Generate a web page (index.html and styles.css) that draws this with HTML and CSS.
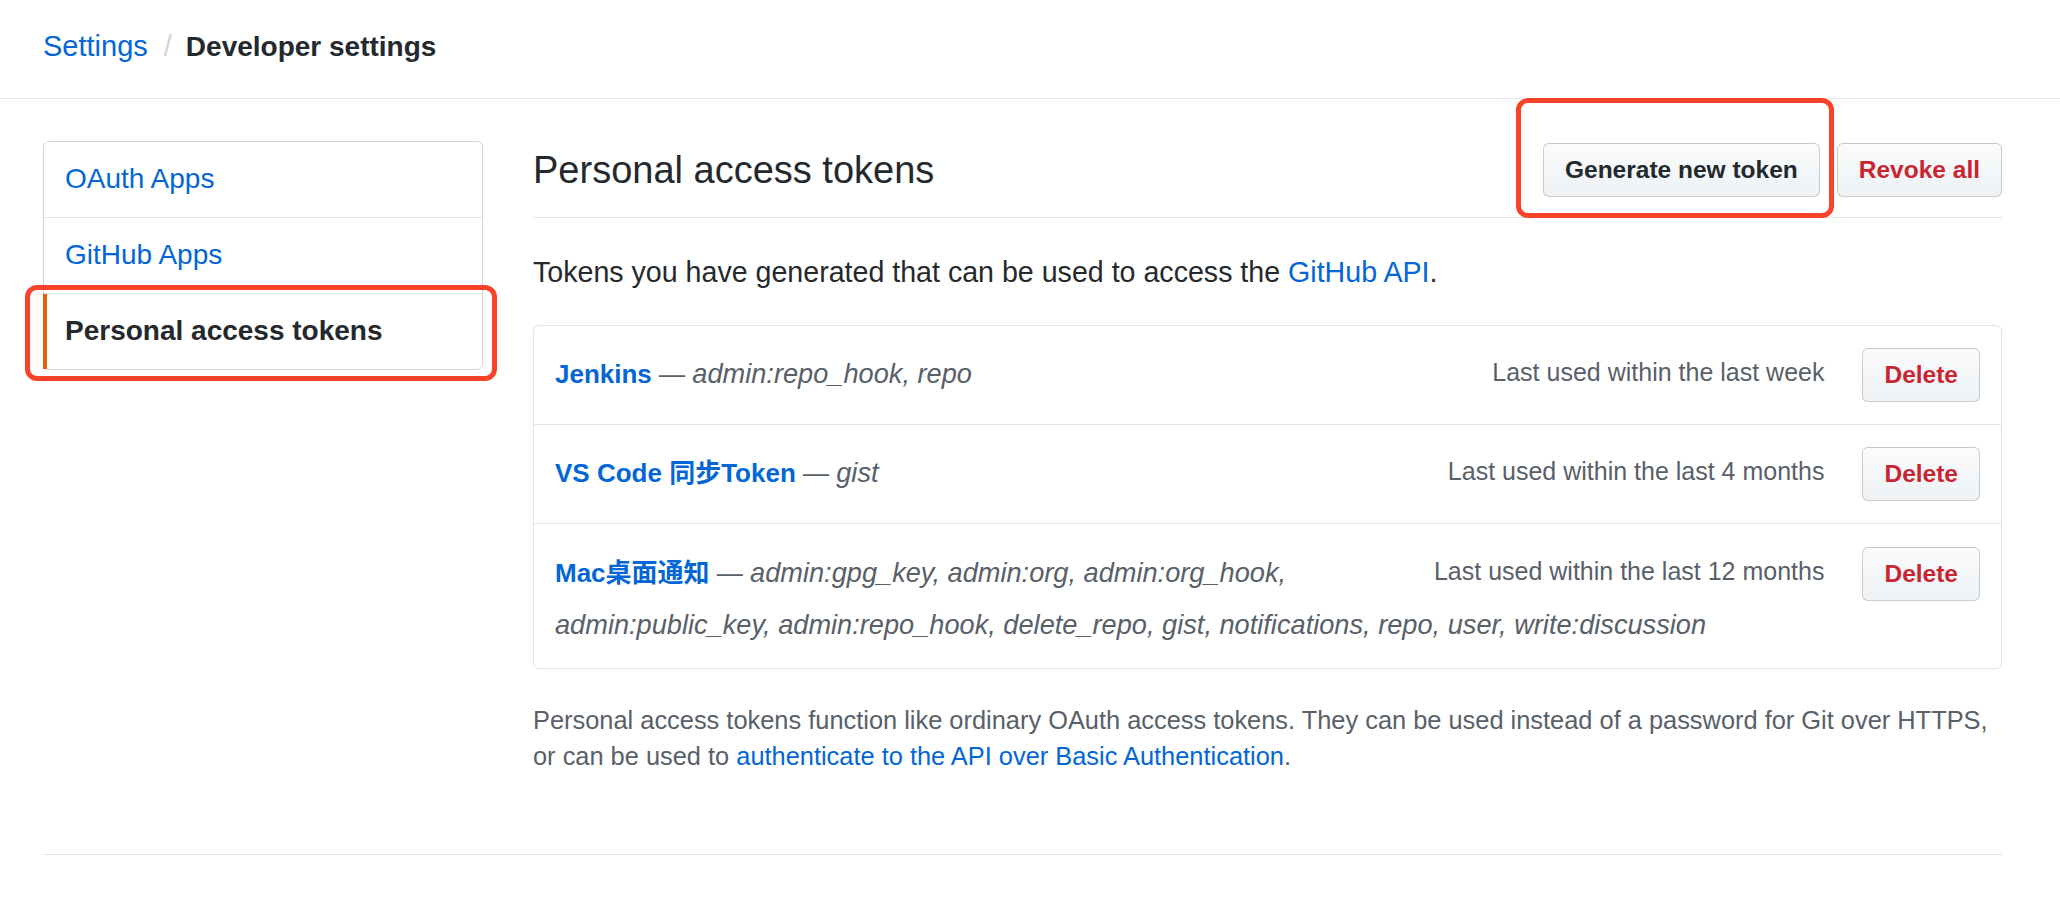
FILE: index.html
```html
<!DOCTYPE html>
<html lang="en">
<head>
<meta charset="utf-8">
<title>Personal access tokens</title>
<link rel="stylesheet" href="styles.css">
</head>
<body>
<header class="page-header">
  <nav class="breadcrumb">
    <a href="#" class="crumb-link">Settings</a>
    <span class="crumb-sep">/</span>
    <strong class="crumb-current">Developer settings</strong>
  </nav>
</header>
<div class="layout">
  <aside class="sidebar">
    <nav class="menu">
      <a class="menu-item" href="#">OAuth Apps</a>
      <a class="menu-item" href="#">GitHub Apps</a>
      <a class="menu-item selected" href="#">Personal access tokens</a>
    </nav>
  </aside>
  <main class="content">
    <div class="subhead">
      <h2 class="subhead-heading">Personal access tokens</h2>
      <div class="subhead-actions">
        <a href="#" class="btn btn-highlight">Generate new token</a>
        <a href="#" class="btn btn-danger">Revoke all</a>
      </div>
    </div>
    <p class="intro">Tokens you have generated that can be used to access the <a href="#">GitHub API</a>.</p>
    <div class="listgroup">
      <div class="listgroup-item">
        <a href="#" class="btn btn-danger btn-delete">Delete</a>
        <small class="last-used">Last used within the last week</small>
        <a href="#" class="token-name">Jenkins</a> <span class="token-scopes">— <em>admin:repo_hook, repo</em></span>
      </div>
      <div class="listgroup-item">
        <a href="#" class="btn btn-danger btn-delete">Delete</a>
        <small class="last-used">Last used within the last 4 months</small>
        <a href="#" class="token-name">VS Code 同步Token</a> <span class="token-scopes">— <em>gist</em></span>
      </div>
      <div class="listgroup-item">
        <a href="#" class="btn btn-danger btn-delete">Delete</a>
        <small class="last-used">Last used within the last 12 months</small>
        <a href="#" class="token-name">Mac桌面通知</a> <span class="token-scopes">— <em>admin:gpg_key, admin:org, admin:org_hook, admin:public_key, admin:repo_hook, delete_repo, gist, notifications, repo, user, write:discussion</em></span>
      </div>
    </div>
    <p class="note">Personal access tokens function like ordinary OAuth access tokens. They can be used instead of a password for Git over HTTPS, or can be used to <a href="#">authenticate to the API over Basic Authentication</a>.</p>
  </main>
</div>
<footer class="page-footer"></footer>
</body>
</html>
```

FILE: styles.css
```css
* {
  box-sizing: border-box;
}

body {
  margin: 0;
  font-family: "Liberation Sans", Arial, "Noto Sans CJK SC", sans-serif;
  color: #24292e;
  background: #fff;
}

a {
  color: #0366d6;
  text-decoration: none;
}

/* Header / breadcrumb */
.page-header {
  height: 99px;
  padding: 25px 43px 0;
  border-bottom: 1px solid #e1e4e8;
}

.breadcrumb {
  display: flex;
  align-items: baseline;
  font-size: 29px;
  line-height: 43px;
}

.crumb-sep {
  color: #d1d5da;
  margin: 0 14px 0 16px;
}

.crumb-current {
  font-size: 28px;
  font-weight: 700;
  color: #24292e;
}

/* Layout */
.layout {
  display: flex;
  gap: 50px;
  padding: 42px 58px 0 43px;
}

.sidebar {
  flex: none;
  width: 440px;
}

.menu {
  border: 1px solid #d1d5da;
  border-radius: 6px;
}

.menu-item {
  position: relative;
  display: block;
  padding: 16px 21px 17px;
  font-size: 28px;
  line-height: 42px;
  border-bottom: 1px solid #e1e4e8;
}

.menu-item:last-child {
  border-bottom: 0;
}

.menu-item.selected {
  color: #24292e;
  font-weight: 700;
}

.menu-item.selected::before {
  content: "";
  position: absolute;
  left: -1px;
  top: 0;
  bottom: 0;
  width: 4px;
  background: #e36209;
}

.menu-item.selected::after {
  content: "";
  position: absolute;
  left: -19px;
  top: -9px;
  right: -15px;
  bottom: -12px;
  border: 5px solid #f8432a;
  border-radius: 12px;
  z-index: 2;
}

/* Main content */
.content {
  flex: 1;
  min-width: 0;
}

.subhead {
  display: flex;
  align-items: center;
  justify-content: space-between;
  margin-top: 2px;
  padding-bottom: 20px;
  border-bottom: 1px solid #e1e4e8;
}

.subhead-heading {
  margin: 0;
  font-size: 38px;
  font-weight: 400;
  line-height: 47px;
}

.subhead-actions {
  display: flex;
  gap: 17px;
}

.btn {
  display: inline-block;
  padding: 6px 21px;
  font-size: 24.5px;
  font-weight: 700;
  line-height: 40px;
  color: #24292e;
  white-space: nowrap;
  background-color: #eff3f6;
  background-image: linear-gradient(-180deg, #fafbfc 0%, #eff3f6 90%);
  border: 1px solid rgba(27, 31, 35, 0.2);
  border-radius: 6px;
}

.btn-danger {
  color: #cb2431;
}

.btn-highlight {
  position: relative;
}

.btn-highlight::after {
  content: "";
  position: absolute;
  left: -28px;
  top: -46px;
  right: -15px;
  bottom: -22px;
  border: 5px solid #f8432a;
  border-radius: 12px;
}

.intro {
  margin: 33px 0 0;
  font-size: 28.6px;
  line-height: 42px;
}

/* Token list */
.listgroup {
  margin-top: 32px;
  border: 1px solid #e1e4e8;
  border-radius: 6px;
}

.listgroup-item {
  display: flow-root;
  padding: 22px 21px 22px;
  font-size: 26px;
  line-height: 51px;
  border-bottom: 1px solid #e1e4e8;
}

.listgroup-item:last-child {
  border-bottom: 0;
  padding-top: 23px;
  padding-bottom: 17px;
}

.btn-delete {
  float: right;
}

.last-used {
  float: right;
  margin-right: 38px;
  font-size: 25px;
  line-height: 48px;
  color: #586069;
}

.token-name {
  font-weight: 700;
}

.token-scopes {
  color: #586069;
}

.token-scopes em {
  font-size: 27.2px;
}

.note {
  margin: 33px 0 0;
  font-size: 25.4px;
  line-height: 36px;
  color: #586069;
}

.page-footer {
  margin: 80px 58px 0 43px;
  height: 40px;
  border-top: 1px solid #e1e4e8;
}
```
